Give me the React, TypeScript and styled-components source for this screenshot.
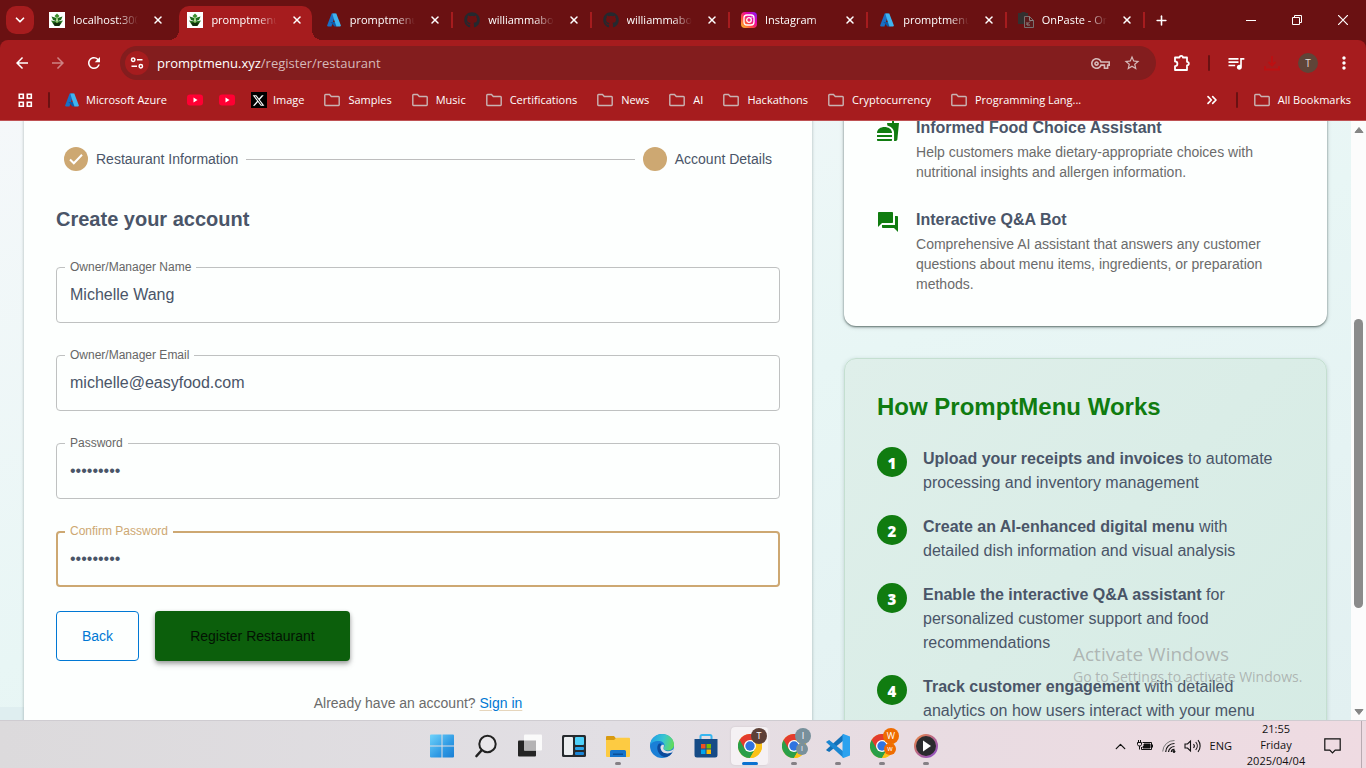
import React from "react";
import styled, { createGlobalStyle, css } from "styled-components";
import {
  MdArrowBack,
  MdArrowForward,
  MdRefresh,
  MdStarBorder,
  MdOutlineVpnKey,
  MdQueueMusic,
  MdFastfood,
  MdForum,
  MdMoreVert,
} from "react-icons/md";
import { FaGithub, FaXTwitter } from "react-icons/fa6";
import { ChevronDown, ChevronsRight, ChevronUp, Plus, X } from "lucide-react";

const uiFont = `"Open Sans", "Noto Sans", sans-serif`;
const pageFont = `"Liberation Sans", Arial, sans-serif`;

const c = {
  frame: "#6a1112",
  toolbar: "#a61c1e",
  omnibox: "#831d1e",
  ink: "#4a5568",
  muted: "#6b6b6b",
  green: "#107c10",
  gold: "#cda872",
  blue: "#0078d4",
  card: "#fdfffe",
};

const GlobalStyle = createGlobalStyle`
  *, *::before, *::after { box-sizing: border-box; }
  body { margin: 0; overflow: hidden; font-family: ${pageFont}; color: ${c.ink}; }
  button { font: inherit; color: inherit; border: 0; padding: 0; background: none; cursor: pointer; }
  h2, h3, p, ul, ol { margin: 0; padding: 0; }
  ul, ol { list-style: none; }
  svg { display: block; flex: none; }
`;

const Desktop = styled.div`
  display: flex;
  flex-direction: column;
  height: 100vh;
`;

/* ---------- browser frame ---------- */

const TabStrip = styled.div`
  display: flex;
  align-items: stretch;
  height: 40px;
  padding-left: 6px;
  background: ${c.frame};
  color: #fff;
  font: 11px/16px ${uiFont};
`;

const TabSearch = styled.button`
  display: flex;
  align-items: center;
  justify-content: center;
  align-self: center;
  width: 28px;
  height: 28px;
  border-radius: 10px;
  background: ${c.toolbar};
`;

const Tabs = styled.div`
  display: flex;
  flex: 0 1 1111px;
  min-width: 0;
  padding-left: 4px;
`;

const Tab = styled.div<{ $active?: boolean; $divider?: boolean }>`
  position: relative;
  display: flex;
  flex: 1 1 0;
  align-items: center;
  gap: 8px;
  min-width: 0;
  padding: 0 6px 0 11px;

  ${(p) =>
    p.$divider &&
    css`
      &::after {
        content: "";
        position: absolute;
        right: 0;
        top: 12px;
        width: 2px;
        height: 16px;
        background: ${c.toolbar};
      }
    `}

  ${(p) =>
    p.$active &&
    css`
      z-index: 0;
      &::before {
        content: "";
        position: absolute;
        z-index: -1;
        inset: 6px 3px 0;
        border-radius: 10px 10px 0 0;
        background: ${c.toolbar};
      }
    `}
`;

const Flare = styled.span<{ $side: "left" | "right" }>`
  position: absolute;
  bottom: 0;
  ${(p) => p.$side}: -7px;
  width: 10px;
  height: 10px;
  background: radial-gradient(
    circle at ${(p) => (p.$side === "left" ? "0 0" : "100% 0")},
    transparent 10px,
    ${c.toolbar} 10px
  );
`;

const TabTitle = styled.span`
  flex: 1;
  overflow: hidden;
  white-space: nowrap;
  mask-image: linear-gradient(to right, #000 70%, transparent);
`;

const TabClose = styled.button`
  display: flex;
  justify-content: center;
  width: 24px;
`;

const NewTab = styled.button`
  display: flex;
  align-items: center;
  justify-content: center;
  width: 32px;
`;

const WindowControls = styled.div`
  display: flex;
  margin-left: auto;
`;

const WindowButton = styled.button`
  display: flex;
  align-items: center;
  justify-content: center;
  width: 46px;
`;

const ToolbarWrap = styled.div`
  background: ${c.frame};
`;

const Divider = styled.span`
  flex: none;
  width: 2px;
  height: 16px;
  border-radius: 1px;
  background: ${c.frame};
`;

const Toolbar = styled.div`
  display: flex;
  align-items: center;
  height: 46px;
  padding: 0 4px;
  border-radius: 8px 8px 0 0;
  background: ${c.toolbar};
  color: #fff;

  > ${Divider} {
    margin: 0 8px;
  }
`;

const ToolButton = styled.button<{ $dim?: boolean }>`
  display: flex;
  align-items: center;
  justify-content: center;
  width: 36px;
  height: 34px;
  opacity: ${(p) => (p.$dim ? 0.45 : 1)};
`;

const Omnibox = styled.div`
  display: flex;
  flex: 1;
  align-items: center;
  height: 34px;
  margin: 0 8px;
  padding: 0 8px 0 5px;
  border-radius: 17px;
  background: ${c.omnibox};
  color: #d6b9b9;
  font: 13px/18px ${uiFont};
`;

const SiteInfo = styled.button`
  display: flex;
  align-items: center;
  justify-content: center;
  width: 24px;
  height: 24px;
  margin-right: 8px;
  border-radius: 50%;
  background: ${c.toolbar};
  color: #fff;
`;

const Url = styled.span`
  flex: 1;
  b {
    font-weight: 400;
    color: #fff;
  }
`;

const OmniButton = styled.button`
  display: flex;
  align-items: center;
  justify-content: center;
  width: 32px;
`;

const Avatar = styled.span`
  display: flex;
  align-items: center;
  justify-content: center;
  width: 20px;
  height: 20px;
  border-radius: 50%;
  background: #5f4438;
  color: #e8dcd8;
  font: 10px/20px ${uiFont};
`;

const BookmarkBar = styled.nav`
  display: flex;
  align-items: center;
  height: 35px;
  padding: 0 15px 6px 18px;
  border-bottom: 1px solid #bf5254;
  background: ${c.toolbar};
  color: #fff;
  font: 11px/16px ${uiFont};

  > ${Divider} {
    margin: 0 14px 0 15px;
  }
`;

const Bookmark = styled.a<{ $folder?: boolean }>`
  display: flex;
  align-items: center;
  gap: ${(p) => (p.$folder ? 8 : 6)}px;
  color: inherit;
  text-decoration: none;
  white-space: nowrap;
`;

const BookmarkLinks = styled.div`
  display: flex;
  align-items: center;
  gap: 16px;
  min-width: 0;

  span {
    margin-right: 4px;
  }
`;

const BookmarkEnd = styled.div`
  display: flex;
  align-items: center;
  gap: 16px;
  margin-left: auto;
`;

/* ---------- page ---------- */

const Viewport = styled.div`
  display: flex;
  flex: 1;
  min-height: 0;
  overflow: hidden;
`;

const Page = styled.main`
  flex: 1;
  min-width: 0;
  overflow: hidden;
  background:
    linear-gradient(#dfeef0, #dfeef0) left bottom / 24px 13px no-repeat,
    linear-gradient(160deg, #f5f8fa 0%, #e8f6f5 50%, #e2f0f1 100%);
`;

const Columns = styled.div`
  display: grid;
  grid-template-columns: 62fr 38fr;
  gap: 32px;
  margin-top: -32px;
  padding: 0 24px;
`;

const FormCard = styled.section`
  padding: 58px 32px 32px;
  background: ${c.card};
  box-shadow: 0 0 3px rgba(40, 60, 60, 0.35);
`;

const Stepper = styled.ol`
  display: flex;
  align-items: center;
  gap: 8px;
  padding: 0 8px;
`;

const Step = styled.li`
  display: flex;
  align-items: center;
  gap: 8px;
  font-size: 14px;
  line-height: 24px;
`;

const StepDot = styled.span`
  display: flex;
  align-items: center;
  justify-content: center;
  width: 24px;
  height: 24px;
  border-radius: 50%;
  background: ${c.gold};
`;

const Connector = styled.li`
  flex: 1;
  height: 1px;
  background: #bdbdbd;
`;

const FormTitle = styled.h2`
  margin: 32px 0;
  font-size: 20px;
  line-height: 32px;
`;

const Form = styled.form`
  display: flex;
  flex-direction: column;
  gap: 32px;
`;

const Field = styled.div<{ $focused?: boolean }>`
  position: relative;

  label {
    position: absolute;
    top: -8px;
    left: 9px;
    padding: 0 5px;
    background: ${c.card};
    color: ${(p) => (p.$focused ? c.gold : "#666")};
    font-size: 12px;
    line-height: 16px;
  }

  input {
    display: block;
    width: 100%;
    height: 56px;
    padding: 0 ${(p) => (p.$focused ? 12 : 13)}px;
    border: ${(p) => (p.$focused ? `2px solid ${c.gold}` : "1px solid #bfc1c1")};
    border-radius: 4px;
    outline: 0;
    background: transparent;
    color: ${c.ink};
    font: 16px/24px ${pageFont};
  }
`;

const Actions = styled.div`
  display: flex;
  gap: 16px;
  margin-top: -8px;
`;

const ActionButton = styled.button<{ $primary?: boolean }>`
  height: 50px;
  padding: 0 ${(p) => (p.$primary ? 35 : 25)}px;
  border-radius: 4px;
  font-size: 14px;
  line-height: 24px;
  ${(p) =>
    p.$primary
      ? css`
          background: #0c5f0c;
          color: #031303;
          box-shadow: 0 2px 4px rgba(0, 0, 0, 0.3), 0 4px 6px rgba(0, 0, 0, 0.15);
        `
      : css`
          border: 1px solid ${c.blue};
          color: ${c.blue};
        `}
`;

const SignIn = styled.p`
  color: ${c.muted};
  font-size: 14px;
  line-height: 20px;
  text-align: center;

  a {
    color: ${c.blue};
    text-decoration: underline;
    text-decoration-color: #e6d6bc;
    text-underline-offset: 2px;
  }
`;

const Aside = styled.aside`
  display: flex;
  flex-direction: column;
  gap: 32px;
`;

const FeatureCard = styled.section`
  padding: 27px 32px 32px;
  border-radius: 12px;
  background: ${c.card};
  box-shadow: 0 1px 2px rgba(30, 50, 45, 0.6), 0 1px 4px rgba(40, 60, 60, 0.25);
`;

const FeatureList = styled.ul`
  display: flex;
  flex-direction: column;
  gap: 26px;
`;

const Feature = styled.li`
  display: flex;
  gap: 16px;

  > svg {
    margin-top: 2px;
    color: ${c.green};
  }
  h3 {
    font-size: 16px;
    line-height: 24px;
  }
  p {
    margin-top: 2px;
    color: ${c.muted};
    font-size: 14px;
    line-height: 20px;
  }
`;

const WorksCard = styled.section`
  padding: 32px;
  border: 1px solid #c4dfd0;
  border-radius: 12px;
  background: linear-gradient(135deg, #dfefea, #d5ebe4);
  box-shadow: 0 1px 4px rgba(40, 80, 80, 0.2);

  h2 {
    margin-bottom: 24px;
    color: ${c.green};
    font-size: 24px;
    line-height: 32px;
  }
`;

const WorksList = styled.ol`
  display: flex;
  flex-direction: column;
  gap: 20px;
  padding-right: 8px;
`;

const WorksStep = styled.li`
  display: flex;
  gap: 16px;
  font-size: 16px;
  line-height: 24px;
`;

const StepNumber = styled.span`
  flex: none;
  width: 30px;
  height: 30px;
  border-radius: 50%;
  background: ${c.green};
  color: #fff;
  font: 800 15px/32px ${uiFont};
  text-align: center;
`;

const Scrollbar = styled.div`
  display: flex;
  flex-direction: column;
  align-items: center;
  width: 15px;
  padding: 5px 0 4px;
  background: #fcfcfc;
`;

const ScrollTrack = styled.div`
  flex: 1;
  display: flex;
  flex-direction: column;
  width: 9px;
  margin: 2px 0;

  &::before {
    content: "";
    flex: 183;
  }
  &::after {
    content: "";
    flex: 98;
  }
`;

const ScrollThumb = styled.div`
  flex: 289;
  border-radius: 5px;
  background: #8b8b8b;
`;

const Watermark = styled.div`
  position: absolute;
  right: 57px;
  bottom: 81px;
  min-width: 236px;
  color: rgba(150, 150, 150, 0.65);
  font: 14px/20px ${uiFont};
  pointer-events: none;

  strong {
    display: block;
    font-size: 19px;
    font-weight: 400;
    line-height: 26px;
  }
`;

/* ---------- taskbar ---------- */

const Taskbar = styled.footer`
  display: grid;
  grid-template-columns: 1fr auto 1fr;
  align-items: center;
  height: 48px;
  border-top: 1px solid #cfccd1;
  background: linear-gradient(90deg, #dcdadc 0%, #e2dfe4 45%, #e8dce2 65%, #efdbe2 100%);
  color: #111;
  font: 11px/16px ${uiFont};
`;

const Apps = styled.div`
  grid-column: 2;
  display: flex;
  padding-left: 2px;
`;

const AppButton = styled.button<{ $state?: "open" | "active" }>`
  position: relative;
  display: flex;
  align-items: center;
  justify-content: center;
  width: 44px;
  height: 46px;

  ${(p) =>
    p.$state === "active" &&
    css`
      &::before {
        content: "";
        position: absolute;
        inset: 4px 4px 4px 3px;
        border-radius: 4px;
        background: #f5f1f4;
        box-shadow: 2px 0 0 #e8e2e6, 0 0 2px #c9c0c6;
      }
    `}

  ${(p) =>
    p.$state &&
    css`
      &::after {
        content: "";
        position: absolute;
        bottom: 4px;
        left: 50%;
        width: ${p.$state === "active" ? 16 : 6}px;
        height: 3px;
        border-radius: 2px;
        background: ${p.$state === "active" ? "#0a72d0" : "#858085"};
        transform: translateX(-50%);
      }
    `}

  > svg {
    position: relative;
  }
`;

const Badge = styled.span<{ $color: string; $small?: boolean }>`
  position: absolute;
  top: ${(p) => (p.$small ? 20 : 5)}px;
  left: ${(p) => (p.$small ? 24 : 23)}px;
  width: ${(p) => (p.$small ? 12 : 16)}px;
  height: ${(p) => (p.$small ? 12 : 16)}px;
  border-radius: 50%;
  background: ${(p) => p.$color};
  color: #fff;
  font-size: ${(p) => (p.$small ? 7 : 9)}px;
  line-height: ${(p) => (p.$small ? 12 : 16)}px;
`;

const Tray = styled.div`
  display: flex;
  align-items: center;
  justify-content: flex-end;
  height: 100%;
`;

const TrayIcons = styled.div`
  display: flex;
  align-items: center;
  gap: 8px;
  margin-right: 14px;
`;

const Clock = styled.time`
  display: block;
  width: 60px;
  margin: 0 18px 2px 0;
  text-align: center;
`;

const TrayEdge = styled.span`
  width: 1px;
  height: 100%;
  margin: 0 4px 0 20px;
  background: #b9aab1;
`;

/* ---------- drawings ---------- */

const PlantIcon = () => (
  <svg width="16" height="16" viewBox="0 0 16 16">
    <rect width="16" height="16" fill="#fff" />
    <path d="M8 1.5 10.500 4 8 6.500 5.500 4z" fill="#3f8f30" />
    <path d="M2.500 4.500 7.500 6 7 9 4 8zM13.500 4.500 8.500 6 9 9 12 8z" fill="#1e6b1c" />
    <path d="M2 8.500 8 9.500 14 8.500 11.500 12.500H4.500z" fill="#2b7a25" />
    <path d="M4 10.500h8L10.500 14h-5z" fill="#12300d" />
    <path d="M7.400 5h1.200v6H7.400z" fill="#8ccf62" />
  </svg>
);

const AzureIcon = () => (
  <svg width="16" height="16" viewBox="0 0 16 16">
    <path d="M5.600 1.500h4L5.500 14.500H2A.9.9 0 0 1 1.200 13.300z" fill="#1a6fc4" />
    <path d="M4.300 10h6l1 4.500H8.500z" fill="#0f5aa8" />
    <path d="M6.300 1.500h4l4.500 11.800a.9.9 0 0 1-.8 1.200H10.500L8.500 9z" fill="#3fb4f0" />
  </svg>
);

const InstagramIcon = () => (
  <svg width="16" height="16" viewBox="0 0 16 16" fill="none">
    <defs>
      <linearGradient id="insta" x1="0" y1="1" x2="1" y2="0">
        <stop offset="0" stopColor="#ffc928" />
        <stop offset=".35" stopColor="#ff4a40" />
        <stop offset=".65" stopColor="#e800a8" />
        <stop offset="1" stopColor="#7a22ff" />
      </linearGradient>
    </defs>
    <rect width="16" height="16" rx="4" fill="url(#insta)" />
    <rect x="3" y="3" width="10" height="10" rx="3" stroke="#fff" strokeWidth="1.300" />
    <circle cx="8" cy="8" r="2.300" stroke="#fff" strokeWidth="1.300" />
    <circle cx="10.900" cy="5.100" r=".7" fill="#fff" />
  </svg>
);

const OnPasteIcon = () => (
  <svg width="16" height="16" viewBox="0 0 16 16" fill="none">
    <path d="M0 1h3l1-1h3l1 1h2v3H6v8H0z" fill="#33302f" />
    <path d="M6.500 4.500h5l4 4v7h-9z" fill="#5b1a1b" stroke="#77706f" />
    <path d="M11.500 4.500v4h4M12 9.500l-3 3m0-2.500v3h3" stroke="#8a8382" />
  </svg>
);

const YouTubeIcon = () => (
  <svg width="16" height="16" viewBox="0 0 16 16">
    <rect y="2.500" width="16" height="11" rx="3" fill="#ff0033" />
    <path d="M6.500 5.600v4.800l4-2.400z" fill="#fff" />
  </svg>
);

const XBadge = styled.i`
  display: flex;
  align-items: center;
  justify-content: center;
  width: 16px;
  height: 16px;
  background: #000;
`;

const FolderIcon = () => (
  <svg width="16" height="16" viewBox="0 0 16 16" fill="none" stroke="#c9b3b3" strokeWidth="1.400">
    <path d="M.8 12.800V3.200a.7.7 0 0 1 .7-.7h4l1.800 2h7.200a.7.7 0 0 1 .7.7v7.600a.7.7 0 0 1-.7.700H1.500a.7.7 0 0 1-.7-.700z" />
  </svg>
);

const AppsGridIcon = () => (
  <svg width="15" height="15" viewBox="0 0 15 15" fill="none" stroke="#fff" strokeWidth="1.600">
    <path d="M1.300 1.300h4v4h-4zM9.300 1.300h4v4h-4zM1.300 9.300h4v4h-4zM9.300 9.300h4v4h-4z" />
  </svg>
);

const TuneIcon = () => (
  <svg width="14" height="14" viewBox="0 0 14 14" fill="none" stroke="currentColor" strokeWidth="1.500">
    <circle cx="3.200" cy="3.800" r="1.700" />
    <path d="M7 3.800h5.500M1.500 10.200H7" />
    <circle cx="10.800" cy="10.200" r="1.700" />
  </svg>
);

const ExtensionIcon = () => (
  <svg width="18" height="18" viewBox="0 0 18 18" fill="none" stroke="#fff" strokeWidth="1.800" strokeLinejoin="round">
    <path d="M2 3.500h4.500a1.700 1.700 0 0 1 3.400 0H14v4.300a1.800 1.800 0 0 1 0 3.600V16H2v-3.800a2.400 2.400 0 0 0 0-4.800z" />
  </svg>
);

const DownloadIcon = () => (
  <svg width="18" height="18" viewBox="0 0 18 18" fill="none" stroke="#bd1012" strokeWidth="1.800">
    <path d="M9 2v9M5.500 8 9 11.500 12.500 8M2 12v3.500h14V12" />
  </svg>
);

const RestoreIcon = () => (
  <svg width="10" height="10" viewBox="0 0 10 10" fill="none" stroke="#fff">
    <path d="M.5 2.500h7v7h-7zM2.500 2.500v-2h7v7h-2" />
  </svg>
);

const StartIcon = () => (
  <svg width="24" height="24" viewBox="0 0 24 24">
    <defs>
      <linearGradient id="win" x1="0" y1="0" x2="1" y2="1">
        <stop offset="0" stopColor="#6fd3fb" />
        <stop offset=".6" stopColor="#2f9ae4" />
        <stop offset="1" stopColor="#1a7fd4" />
      </linearGradient>
    </defs>
    <path d="M0 1.500A1 1 0 0 1 1 .5h10.500v11H0zM12.500.5H23a1 1 0 0 1 1 1v10H12.500zM0 12.500h11.500v11H1a1 1 0 0 1-1-1zM12.500 12.500H24v10a1 1 0 0 1-1 1H12.500z" fill="url(#win)" />
  </svg>
);

const SearchIcon = () => (
  <svg width="24" height="24" viewBox="0 0 24 24" fill="none" stroke="#222" strokeLinecap="round">
    <circle cx="13.500" cy="10" r="8.200" strokeWidth="2" fill="#e9e7ea" />
    <path d="m7.500 16.500-5 5.500" strokeWidth="2.600" />
  </svg>
);

const TaskViewIcon = () => (
  <svg width="24" height="24" viewBox="0 0 24 24">
    <rect y="6.500" width="18" height="16" rx="1" fill="#242424" />
    <rect x="6" y=".5" width="18" height="16" rx="1" fill="#fafafa" />
    <path d="M6 6.500h12v10H6z" fill="#b4b3b4" />
  </svg>
);

const WidgetsIcon = () => (
  <svg width="24" height="24" viewBox="0 0 24 24">
    <rect y="1" width="24" height="22" rx="1.500" fill="#262a2e" />
    <rect x="2" y="3" width="9" height="18" rx="1" fill="#eceef0" />
    <rect x="13" y="3" width="9" height="8" rx="1" fill="#4fd2fa" />
    <rect x="13" y="13" width="9" height="3" rx="1" fill="#2aa5ea" />
    <rect x="13" y="18" width="9" height="3" rx="1" fill="#1a86d8" />
  </svg>
);

const ExplorerIcon = () => (
  <svg width="24" height="24" viewBox="0 0 24 24">
    <path d="M0 3a1 1 0 0 1 1-1h7l2 2.500L8 8H0z" fill="#d89a10" />
    <path d="M0 6h8l2.500-2.300H23a1 1 0 0 1 1 1V22a1 1 0 0 1-1 1H1a1 1 0 0 1-1-1z" fill="#fdcb42" />
    <path d="M4 23v-5.500A1.500 1.500 0 0 1 5.500 16h13a1.500 1.500 0 0 1 1.500 1.500V23z" fill="#1674cc" />
    <path d="M7 19.500h10V21H7z" fill="#0b4f97" />
  </svg>
);

const EdgeIcon = () => (
  <svg width="24" height="24" viewBox="0 0 24 24">
    <defs>
      <linearGradient id="edgeTop" x1="0" y1=".3" x2="1" y2=".5">
        <stop offset="0" stopColor="#1f9fe8" />
        <stop offset=".55" stopColor="#38c6d0" />
        <stop offset="1" stopColor="#62dc58" />
      </linearGradient>
    </defs>
    <circle cx="12" cy="12" r="12" fill="#1a7fd6" />
    <path d="M0 11.500C.5 4.500 6 0 12 0c7 0 12 5 12 10.500 0 4-3 6-6.500 6-2.500 0-4-1-4-2 0-.8 1-1.200 1-3 0-2.500-2.500-4.500-5.800-4.500C4 7 1 9 0 11.500z" fill="url(#edgeTop)" />
    <path d="M9 9.500c-3 2.500-2.500 10.500 5 13.500 3.500.500 7-2 8.500-4.800-5 2.500-11.500 1-12-4.700-.1-1.500.3-3 1-3.800z" fill="#0c4a9c" />
    <path d="M13.800 11c.5 1-.4 2.400-.4 3.500 0 1.300 2 2.700 4.600 2.700 2.500 0 4.500-1 5.800-2.700-.3 1.500-.8 2.800-1.500 3.800-5 2.500-11.500 1-11.800-4.800 0-1.500 1.500-3.500 3.300-2.500z" fill="#e4dfe5" />
  </svg>
);

const StoreIcon = () => (
  <svg width="24" height="24" viewBox="0 0 24 24">
    <path d="M6.500 7V2.500A1.500 1.500 0 0 1 8 1h8a1.500 1.500 0 0 1 1.500 1.500V7" fill="none" stroke="#38b6f0" strokeWidth="2" />
    <path d="M.5 5h23v16a2.500 2.500 0 0 1-2.500 2.500H3A2.500 2.500 0 0 1 .5 21z" fill="#164b86" />
    <path d="M7 10h4.500v4.500H7z" fill="#f25022" />
    <path d="M12.500 10H17v4.500h-4.500z" fill="#7fba00" />
    <path d="M7 15.500h4.500V20H7z" fill="#00a4ef" />
    <path d="M12.500 15.500H17V20h-4.500z" fill="#ffb900" />
  </svg>
);

const ChromeIcon = () => (
  <svg width="24" height="24" viewBox="0 0 24 24">
    <circle cx="12" cy="12" r="12" fill="#fbc116" />
    <path d="M1.600 6A12 12 0 0 0 12 24l5.200-9L12 12 6.800 9z" fill="#2a9f48" />
    <path d="M12 6h10.400A12 12 0 0 1 12 24l5.200-9z" fill="#fbc116" />
    <path d="M1.600 6A12 12 0 0 1 22.400 6H12v6L6.800 15z" fill="#e33b2e" />
    <circle cx="12" cy="12" r="6" fill="#fff" />
    <circle cx="12" cy="12" r="4.700" fill="#2f74e0" />
  </svg>
);

const CodeIcon = () => (
  <svg width="24" height="24" viewBox="0 0 24 24">
    <path d="M17.500 0v6.500L3.200 18 .6 16.600a.8.8 0 0 1-.1-1.200z" fill="#1371b8" />
    <path d="M17.500 24v-6.500L3.200 6 .6 7.400a.8.800 0 0 0-.1 1.200z" fill="#1b87d2" />
    <path d="M17.500 0 24 2.600v18.800L17.500 24a1 1 0 0 1-1-1V1a1 1 0 0 1 1-1z" fill="#2ba2ef" />
  </svg>
);

const PlayerIcon = () => (
  <svg width="24" height="24" viewBox="0 0 24 24">
    <defs>
      <linearGradient id="ring" x1="0" y1="0" x2="1" y2="1">
        <stop offset="0" stopColor="#f08a3c" />
        <stop offset=".5" stopColor="#b5658f" />
        <stop offset="1" stopColor="#8a4fd0" />
      </linearGradient>
    </defs>
    <circle cx="12" cy="12" r="12" fill="url(#ring)" />
    <circle cx="12" cy="12" r="10" fill="#2b2b2e" />
    <path d="M9 6.500v11l8-5.500z" fill="#fff" />
  </svg>
);

const BatteryIcon = () => (
  <svg width="17" height="12" viewBox="0 0 17 12" fill="none" stroke="#111">
    <path d="M5.500 2.500h9v7h-10V7" />
    <path d="M7 4h6v4H6V6.500h1z" fill="#111" />
    <path d="M15.500 4.500v3M1.500 0v2.500M3.500 0v2.500M.5 2.500h4v2L3.500 6h-2l-1-1.500zM2.500 6v3.500" />
  </svg>
);

const WifiIcon = () => (
  <svg width="14" height="14" viewBox="0 0 14 14" fill="none" stroke="#111">
    <path d="M.7 12.500A11.500 11.500 0 0 1 12.500 1.500" stroke="#777" />
    <path d="M3.700 13A8.500 8.500 0 0 1 12.500 4.500M6.500 13a6 6 0 0 1 6-5.500M9.300 13a3 3 0 0 1 3.200-2.700" strokeWidth="1.200" />
    <circle cx="12" cy="12.500" r="1" fill="#111" />
  </svg>
);

const SpeakerIcon = () => (
  <svg width="18" height="14" viewBox="0 0 18 14" fill="none" stroke="#111" strokeWidth="1.100">
    <path d="M1 5v4h2.500l3 3V2l-3 3zM9.500 5a3 3 0 0 1 0 4M11.700 3a6 6 0 0 1 0 8M14 1.200a9 9 0 0 1 0 11.600" />
  </svg>
);

const NotificationIcon = () => (
  <svg width="17" height="16" viewBox="0 0 17 16" fill="none" stroke="#111" strokeWidth="1.200">
    <path d="M.8.800h15.400v11.400h-5L8.500 15l-2.700-2.800h-5z" />
  </svg>
);

const ScrollArrow = ({ down }: { down?: boolean }) => (
  <svg width="10" height="8" viewBox="0 0 10 8" fill="#858585" stroke="#858585" strokeLinejoin="round">
    <path d={down ? "M1 1.500h8L5 6.500z" : "M1 6.500h8L5 1.500z"} />
  </svg>
);

/* ---------- data ---------- */

const github = <FaGithub size={16} color="#24292f" />;

const tabs = [
  { icon: <PlantIcon />, title: "localhost:3000/register" },
  { icon: <PlantIcon />, title: "promptmenu.xyz", active: true },
  { icon: <AzureIcon />, title: "promptmenu - Azure", divider: true },
  { icon: github, title: "williammabotja", divider: true },
  { icon: github, title: "williammabotja", divider: true },
  { icon: <InstagramIcon />, title: "Instagram", divider: true },
  { icon: <AzureIcon />, title: "promptmenu - Azure", divider: true },
  { icon: <OnPasteIcon />, title: "OnPaste - Online", divider: true },
];

const folders = [
  "Samples",
  "Music",
  "Certifications",
  "News",
  "AI",
  "Hackathons",
  "Cryptocurrency",
  "Programming Lang...",
];

const fields = [
  { id: "owner", label: "Owner/Manager Name", type: "text", value: "Michelle Wang" },
  { id: "email", label: "Owner/Manager Email", type: "email", value: "michelle@easyfood.com" },
  { id: "password", label: "Password", type: "password", value: "123456789" },
  { id: "confirm", label: "Confirm Password", type: "password", value: "123456789", focused: true },
];

const features = [
  {
    icon: <MdFastfood size={24} />,
    title: "Informed Food Choice Assistant",
    text: "Help customers make dietary-appropriate choices with nutritional insights and allergen information.",
  },
  {
    icon: <MdForum size={24} />,
    title: "Interactive Q&A Bot",
    text: "Comprehensive AI assistant that answers any customer questions about menu items, ingredients, or preparation methods.",
  },
];

const works = [
  ["Upload your receipts and invoices", "to automate processing and inventory management"],
  ["Create an AI-enhanced digital menu", "with detailed dish information and visual analysis"],
  ["Enable the interactive Q&A assistant", "for personalized customer support and food recommendations"],
  ["Track customer engagement", "with detailed analytics on how users interact with your menu"],
];

/* ---------- sections ---------- */

const BrowserFrame = () => (
  <header>
    <TabStrip>
      <TabSearch aria-label="Search tabs">
        <ChevronDown size={14} strokeWidth={3} />
      </TabSearch>
      <Tabs>
        {tabs.map((t, i) => (
          <Tab key={i} $active={t.active} $divider={t.divider}>
            {t.active && <Flare $side="left" />}
            {t.active && <Flare $side="right" />}
            {t.icon}
            <TabTitle>{t.title}</TabTitle>
            <TabClose aria-label="Close tab">
              <X size={12} strokeWidth={3} />
            </TabClose>
          </Tab>
        ))}
      </Tabs>
      <NewTab aria-label="New tab">
        <Plus size={15} strokeWidth={2.5} />
      </NewTab>
      <WindowControls>
        <WindowButton aria-label="Minimize">
          <svg width="10" height="10" viewBox="0 0 10 10" stroke="#fff">
            <path d="M0 5.500h10" />
          </svg>
        </WindowButton>
        <WindowButton aria-label="Restore">
          <RestoreIcon />
        </WindowButton>
        <WindowButton aria-label="Close">
          <svg width="10" height="10" viewBox="0 0 10 10" stroke="#fff" strokeWidth="1.200">
            <path d="m0 0 10 10M10 0 0 10" />
          </svg>
        </WindowButton>
      </WindowControls>
    </TabStrip>
    <ToolbarWrap>
      <Toolbar>
        <ToolButton aria-label="Back">
          <MdArrowBack size={18} />
        </ToolButton>
        <ToolButton aria-label="Forward" $dim>
          <MdArrowForward size={18} />
        </ToolButton>
        <ToolButton aria-label="Reload">
          <MdRefresh size={18} />
        </ToolButton>
        <Omnibox>
          <SiteInfo aria-label="Site information">
            <TuneIcon />
          </SiteInfo>
          <Url>
            <b>promptmenu.xyz</b>/register/restaurant
          </Url>
          <OmniButton aria-label="Passwords">
            <MdOutlineVpnKey size={19} />
          </OmniButton>
          <OmniButton aria-label="Bookmark this page">
            <MdStarBorder size={18} />
          </OmniButton>
        </Omnibox>
        <ToolButton aria-label="Extensions">
          <ExtensionIcon />
        </ToolButton>
        <Divider />
        <ToolButton aria-label="Media">
          <MdQueueMusic size={20} />
        </ToolButton>
        <ToolButton aria-label="Downloads">
          <DownloadIcon />
        </ToolButton>
        <ToolButton aria-label="Profile">
          <Avatar>T</Avatar>
        </ToolButton>
        <ToolButton aria-label="Menu">
          <MdMoreVert size={20} />
        </ToolButton>
      </Toolbar>
    </ToolbarWrap>
    <BookmarkBar>
      <AppsGridIcon />
      <Divider />
      <BookmarkLinks>
        <Bookmark href="#">
          <AzureIcon />
          <span>Microsoft Azure</span>
        </Bookmark>
        <Bookmark href="#" aria-label="YouTube">
          <YouTubeIcon />
        </Bookmark>
        <Bookmark href="#" aria-label="YouTube">
          <YouTubeIcon />
        </Bookmark>
        <Bookmark href="#">
          <XBadge>
            <FaXTwitter size={13} />
          </XBadge>
          <span>Image</span>
        </Bookmark>
        {folders.map((f) => (
          <Bookmark key={f} href="#" $folder>
            <FolderIcon />
            <span>{f}</span>
          </Bookmark>
        ))}
      </BookmarkLinks>
      <BookmarkEnd>
        <ChevronsRight size={16} strokeWidth={2.5} />
        <Divider />
        <Bookmark href="#" $folder>
          <FolderIcon />
          All Bookmarks
        </Bookmark>
      </BookmarkEnd>
    </BookmarkBar>
  </header>
);

const RegisterForm = () => (
  <FormCard>
    <Stepper>
      <Step>
        <StepDot>
          <svg width="16" height="16" viewBox="0 0 16 16" fill="none" stroke="#fff" strokeWidth="2">
            <path d="m2 8.500 3.800 3.800L14 3.800" />
          </svg>
        </StepDot>
        Restaurant Information
      </Step>
      <Connector aria-hidden />
      <Step>
        <StepDot />
        Account Details
      </Step>
    </Stepper>
    <FormTitle>Create your account</FormTitle>
    <Form onSubmit={(e) => e.preventDefault()}>
      {fields.map((f) => (
        <Field key={f.id} $focused={f.focused}>
          <input id={f.id} type={f.type} defaultValue={f.value} />
          <label htmlFor={f.id}>{f.label}</label>
        </Field>
      ))}
      <Actions>
        <ActionButton type="button">Back</ActionButton>
        <ActionButton type="submit" $primary>
          Register Restaurant
        </ActionButton>
      </Actions>
      <SignIn>
        Already have an account? <a href="#">Sign in</a>
      </SignIn>
    </Form>
  </FormCard>
);

const SidePanels = () => (
  <Aside>
    <FeatureCard>
      <FeatureList>
        {features.map((f) => (
          <Feature key={f.title}>
            {f.icon}
            <div>
              <h3>{f.title}</h3>
              <p>{f.text}</p>
            </div>
          </Feature>
        ))}
      </FeatureList>
    </FeatureCard>
    <WorksCard>
      <h2>How PromptMenu Works</h2>
      <WorksList>
        {works.map(([lead, rest], i) => (
          <WorksStep key={lead}>
            <StepNumber>{i + 1}</StepNumber>
            <p>
              <strong>{lead}</strong> {rest}
            </p>
          </WorksStep>
        ))}
      </WorksList>
    </WorksCard>
  </Aside>
);

const WindowsTaskbar = () => (
  <Taskbar>
    <Apps>
      <AppButton aria-label="Start"><StartIcon /></AppButton>
      <AppButton aria-label="Search"><SearchIcon /></AppButton>
      <AppButton aria-label="Task view"><TaskViewIcon /></AppButton>
      <AppButton aria-label="Widgets"><WidgetsIcon /></AppButton>
      <AppButton aria-label="File Explorer" $state="open"><ExplorerIcon /></AppButton>
      <AppButton aria-label="Edge"><EdgeIcon /></AppButton>
      <AppButton aria-label="Store"><StoreIcon /></AppButton>
      <AppButton aria-label="Chrome, profile T" $state="active">
        <ChromeIcon />
        <Badge $color="#5d4037">T</Badge>
      </AppButton>
      <AppButton aria-label="Chrome, profile I" $state="open">
        <ChromeIcon />
        <Badge $color="#78909c">I</Badge>
        <Badge $color="#78909c" $small>I</Badge>
      </AppButton>
      <AppButton aria-label="Code" $state="open"><CodeIcon /></AppButton>
      <AppButton aria-label="Chrome, profile W" $state="open">
        <ChromeIcon />
        <Badge $color="#ef6c00">W</Badge>
        <Badge $color="#ef6c00" $small>w</Badge>
      </AppButton>
      <AppButton aria-label="Media Player" $state="open"><PlayerIcon /></AppButton>
    </Apps>
    <Tray>
      <TrayIcons>
        <ChevronUp size={17} strokeWidth={1.8} />
        <BatteryIcon />
        <WifiIcon />
        <SpeakerIcon />
        <span>ENG</span>
      </TrayIcons>
      <Clock>
        21:55
        <br />
        Friday
        <br />
        2025/04/04
      </Clock>
      <NotificationIcon />
      <TrayEdge />
    </Tray>
  </Taskbar>
);

export default function App() {
  return (
    <Desktop>
      <GlobalStyle />
      <BrowserFrame />
      <Viewport>
        <Page>
          <Columns>
            <RegisterForm />
            <SidePanels />
          </Columns>
        </Page>
        <Scrollbar aria-hidden>
          <ScrollArrow />
          <ScrollTrack>
            <ScrollThumb />
          </ScrollTrack>
          <ScrollArrow down />
        </Scrollbar>
      </Viewport>
      <Watermark>
        <strong>Activate Windows</strong>
        Go to Settings to activate Windows.
      </Watermark>
      <WindowsTaskbar />
    </Desktop>
  );
}
